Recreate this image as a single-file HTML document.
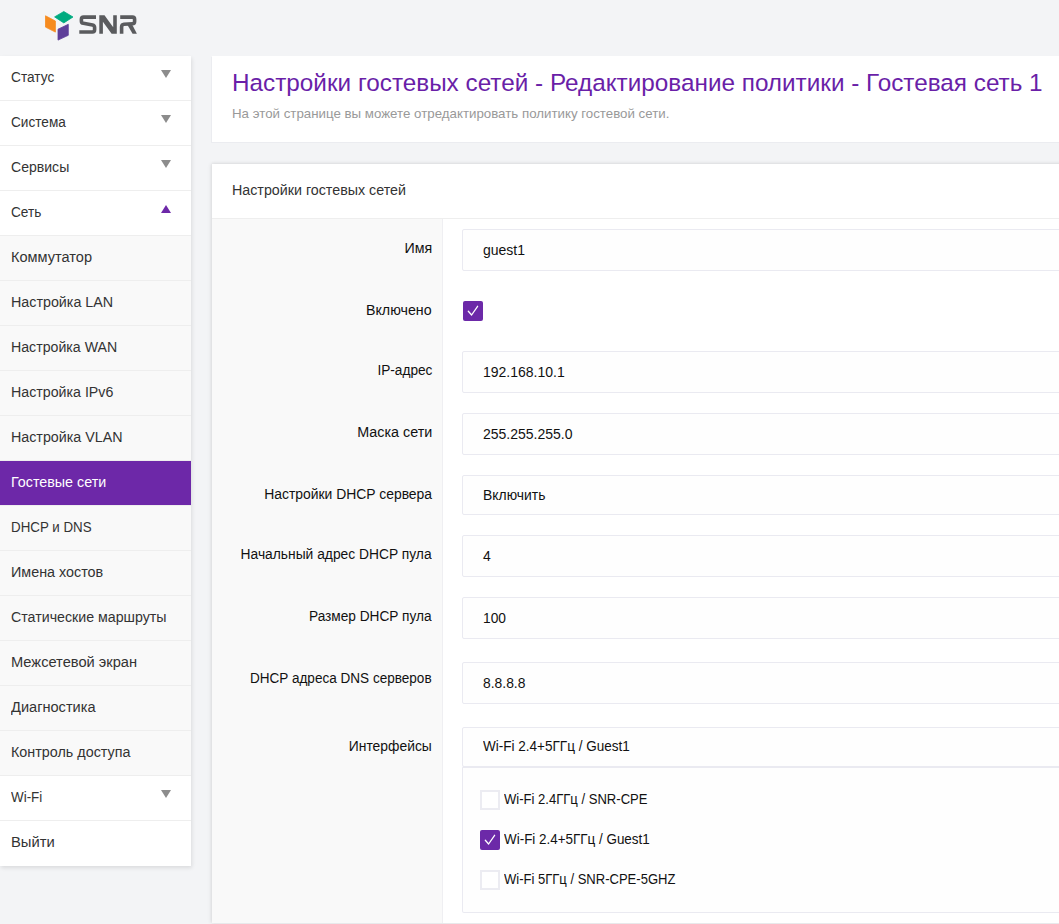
<!DOCTYPE html>
<html><head><meta charset="utf-8">
<style>
*{box-sizing:border-box;margin:0;padding:0}
html,body{width:1059px;height:924px;overflow:hidden;background:#f3f4f6;font-family:"Liberation Sans",sans-serif;color:#333}
#logo{position:absolute;left:0;top:0}
#side{position:absolute;left:0;top:56px;width:191px;background:#fff;box-shadow:1px 2px 4px rgba(0,0,0,0.10)}
#side .it{position:relative;height:45px;border-bottom:1px solid #eeeeee;line-height:42px;padding-left:11px;color:#333;white-space:nowrap}
#side .it.sub{background:#f9f9f9}
#side .it.act{background:#6d28a8;color:#fff}
#side .it.last{border-bottom:none;height:45px}
#side .tri{position:absolute;left:161px;top:14px;width:0;height:0;border-left:5px solid transparent;border-right:5px solid transparent;border-top:8px solid #8c8c8c}
#side .tri.up{border-top:none;border-bottom:8px solid #6d28a8}
#card1{position:absolute;left:212px;top:56px;width:900px;height:86px;background:#fff;box-shadow:-1px 1px 0 #ebecf0}
.title{position:absolute;left:20px;top:13px;font-size:24.31px;color:#6a1fa8;white-space:nowrap;line-height:28px}
.subt{position:absolute;left:20px;top:50px;font-size:13.3px;color:#999;white-space:nowrap;line-height:16px}
#card2{position:absolute;left:212px;top:164px;width:900px;height:759px;background:#fff;box-shadow:-1px 0 4px rgba(0,0,0,0.09), 0 -1px 3px rgba(0,0,0,0.05)}
#card2 .hdr{position:absolute;left:0;top:0;width:100%;height:55px;border-bottom:1px solid #eeeeee}
#card2 .hdr span{position:absolute;left:20px;top:18px;font-size:14.28px;line-height:16px;color:#333;white-space:nowrap}
#lcol{position:absolute;left:0;top:55px;width:231px;height:704px;background:#f9f9f9;border-right:1px solid #efeff2}
.lbl{position:absolute;left:0;width:231px;text-align:right;padding-right:11px;line-height:16px;color:#111;white-space:nowrap}
.inp{position:absolute;left:250px;width:700px;border:1px solid #eaeaf1;background:#fefefe;color:#111;padding-left:20px;white-space:nowrap;border-radius:2px}
.cb{position:absolute;width:20px;height:20px;border-radius:2px}
.cb.on{background:#6c29a8}
.cb.off{border:2px solid #ececf2;background:#fff;border-radius:0}
.cb svg{position:absolute;left:0;top:0}
.sx{display:inline-block;transform-origin:0 50%}
.sxr{display:inline-block;transform-origin:100% 50%}
#side .it,.lbl,.inp,.opt{font-size:14px}
.opt{position:absolute;left:292px;line-height:16px;color:#111;white-space:nowrap}
</style></head><body>
<svg id="logo" width="150" height="50" viewBox="0 0 150 50">
  <g stroke-linejoin="round" stroke-width="0.8">
  <polygon points="45.5,15.8 55.4,21 55.4,32.1 45.5,27.1" fill="#f68b1f" stroke="#f68b1f"/>
  <polygon points="54.6,16.9 63.8,11.5 73.0,17 63.8,22.9" fill="#00ab80" stroke="#00ab80"/>
  <polygon points="58,29.2 68.3,24.3 68.3,35.3 58,40.1" fill="#5f3f9a" stroke="#5f3f9a"/>
  </g>
  <g fill="none" stroke="#5a5b5e" stroke-width="3.6">
  <path d="M96 17.1 H83.6 Q81.4 17.1 81.4 19.3 V21.2 Q81.4 23 83.4 23.3 L92.6 24.9 Q94.6 25.3 94.6 27.5 V29.8 Q94.6 31.95 92.4 31.95 H79.3"/>
  <path d="M120.2 17.1 H132.4 Q134.6 17.1 134.6 19.3 V21.5 Q134.6 23.6 132.4 23.7 L124 24.3 Q121.6 24.5 121.6 27 V33.75"/>
  </g>
  <g fill="#5a5b5e">
  <polygon points="99.3,15.3 104.5,15.3 113.2,27.3 113.2,15.3 116.8,15.3 116.8,33.75 111.6,33.75 102.9,21.8 102.9,33.75 99.3,33.75"/>
  <polygon points="127.2,24.6 132,24.2 136.9,33.75 132.6,33.75"/>
  </g>
</svg>

<div id="side">
  <div class="it"><span id="s0" class="sx" style="transform:scaleX(0.9776)">Статус</span><i class="tri"></i></div>
  <div class="it"><span id="s1" class="sx" style="transform:scaleX(0.9721)">Система</span><i class="tri"></i></div>
  <div class="it"><span id="s2" class="sx" style="transform:scaleX(1.0039)">Сервисы</span><i class="tri"></i></div>
  <div class="it"><span id="s3" class="sx" style="transform:scaleX(0.9745)">Сеть</span><i class="tri up"></i></div>
  <div class="it sub"><span id="s4" class="sx" style="transform:scaleX(1.0393)">Коммутатор</span></div>
  <div class="it sub"><span id="s5" class="sx" style="transform:scaleX(1.0206)">Настройка LAN</span></div>
  <div class="it sub"><span id="s6" class="sx" style="transform:scaleX(1.0117)">Настройка WAN</span></div>
  <div class="it sub"><span id="s7" class="sx" style="transform:scaleX(1.0151)">Настройка IPv6</span></div>
  <div class="it sub"><span id="s8" class="sx" style="transform:scaleX(1.0191)">Настройка VLAN</span></div>
  <div class="it sub act"><span id="s9" class="sx" style="transform:scaleX(1.0214)">Гостевые сети</span></div>
  <div class="it sub"><span id="s10" class="sx" style="transform:scaleX(0.9524)">DHCP и DNS</span></div>
  <div class="it sub"><span id="s11" class="sx" style="transform:scaleX(1.0247)">Имена хостов</span></div>
  <div class="it sub"><span id="s12" class="sx" style="transform:scaleX(1.0145)">Статические маршруты</span></div>
  <div class="it sub"><span id="s13" class="sx" style="transform:scaleX(1.0461)">Межсетевой экран</span></div>
  <div class="it sub"><span id="s14" class="sx" style="transform:scaleX(1.0417)">Диагностика</span></div>
  <div class="it sub"><span id="s15" class="sx" style="transform:scaleX(1.0249)">Контроль доступа</span></div>
  <div class="it"><span id="s16" class="sx" style="transform:scaleX(0.9572)">Wi-Fi</span><i class="tri"></i></div>
  <div class="it last"><span id="s17" class="sx" style="transform:scaleX(1.0552)">Выйти</span></div>
</div>

<div id="card1">
  <div class="title" id="title">Настройки гостевых сетей - Редактирование политики - Гостевая сеть 1</div>
  <div class="subt" id="subt">На этой странице вы можете отредактировать политику гостевой сети.</div>
</div>

<div id="card2">
  <div class="hdr"><span id="hdr">Настройки гостевых сетей</span></div>
  <div id="lcol"></div>
  <div class="lbl" style="top:76px"><span id="l0" class="sxr" style="transform:scaleX(1.0161)">Имя</span></div>
  <div class="lbl" style="top:138px"><span id="l1" class="sxr" style="transform:scaleX(1.0161)">Включено</span></div>
  <div class="lbl" style="top:198px"><span id="l2" class="sxr" style="transform:scaleX(0.9753)">IP-адрес</span></div>
  <div class="lbl" style="top:260px"><span id="l3" class="sxr" style="transform:scaleX(1.0249)">Маска сети</span></div>
  <div class="lbl" style="top:322px"><span id="l4" class="sxr" style="transform:scaleX(0.9931)">Настройки DHCP сервера</span></div>
  <div class="lbl" style="top:382px"><span id="l5" class="sxr" style="transform:scaleX(0.9868)">Начальный адрес DHCP пула</span></div>
  <div class="lbl" style="top:444px"><span id="l6" class="sxr" style="transform:scaleX(0.9764)">Размер DHCP пула</span></div>
  <div class="lbl" style="top:506px"><span id="l7" class="sxr" style="transform:scaleX(0.968)">DHCP адреса DNS серверов</span></div>
  <div class="lbl" style="top:574px"><span id="l8" class="sxr" style="transform:scaleX(0.9906)">Интерфейсы</span></div>
  <div class="cb on" style="left:251px;top:137px"><svg width="20" height="20" viewBox="0 0 20 20"><path d="M5.3 10.2 L8.6 14 L14.6 5.3" fill="none" stroke="#fff" stroke-width="1.3" stroke-linecap="round" stroke-linejoin="round"/></svg></div>
  <div class="inp" style="top:65px;height:42px;line-height:40px"><span id="i0" class="sx" style="transform:scaleX(1)">guest1</span></div>
  <div class="inp" style="top:187px;height:42px;line-height:40px"><span id="i1" class="sx" style="transform:scaleX(1)">192.168.10.1</span></div>
  <div class="inp" style="top:249px;height:42px;line-height:40px"><span id="i2" class="sx" style="transform:scaleX(1)">255.255.255.0</span></div>
  <div class="inp" style="top:311px;height:40px;line-height:38px"><span id="i3" class="sx" style="transform:scaleX(0.9934)">Включить</span></div>
  <div class="inp" style="top:371px;height:42px;line-height:40px"><span id="i4" class="sx" style="transform:scaleX(1)">4</span></div>
  <div class="inp" style="top:433px;height:42px;line-height:40px"><span id="i5" class="sx" style="transform:scaleX(0.9834)">100</span></div>
  <div class="inp" style="top:498px;height:42px;line-height:40px"><span id="i6" class="sx" style="transform:scaleX(0.9906)">8.8.8.8</span></div>
  <div class="inp" style="top:563px;height:40px;line-height:36px"><span id="i7" class="sx" style="transform:scaleX(0.9658)">Wi-Fi 2.4+5ГГц / Guest1</span></div>
  <div class="inp" style="top:602px;height:147px;border-top:2px solid #eaeaf1"></div>
  <div class="cb off" style="left:268px;top:626px"></div>
  <div class="opt" style="top:627px"><span id="o0" class="sx" style="transform:scaleX(0.9327)">Wi-Fi 2.4ГГц / SNR-CPE</span></div>
  <div class="cb on" style="left:268px;top:666px"><svg width="20" height="20" viewBox="0 0 20 20"><path d="M5.3 10.2 L8.6 14 L14.6 5.3" fill="none" stroke="#fff" stroke-width="1.3" stroke-linecap="round" stroke-linejoin="round"/></svg></div>
  <div class="opt" style="top:667px"><span id="o1" class="sx" style="transform:scaleX(0.959)">Wi-Fi 2.4+5ГГц / Guest1</span></div>
  <div class="cb off" style="left:268px;top:706px"></div>
  <div class="opt" style="top:707px"><span id="o2" class="sx" style="transform:scaleX(0.9306)">Wi-Fi 5ГГц / SNR-CPE-5GHZ</span></div>
</div>
</body></html>
